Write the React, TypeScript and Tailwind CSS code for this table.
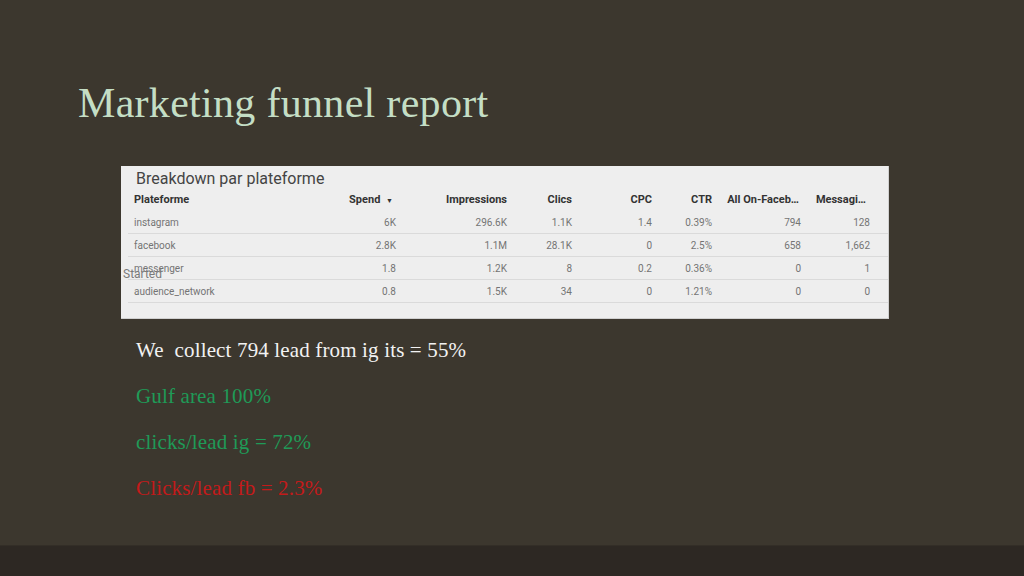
import React from "react";

const rows = [
  ["instagram", "6K", "296.6K", "1.1K", "1.4", "0.39%", "794", "128"],
  ["facebook", "2.8K", "1.1M", "28.1K", "0", "2.5%", "658", "1,662"],
  ["messenger", "1.8", "1.2K", "8", "0.2", "0.36%", "0", "1"],
  ["audience_network", "0.8", "1.5K", "34", "0", "1.21%", "0", "0"],
];

const grid = "grid grid-cols-[172px_102px_111px_65px_80px_60px_89px_69px]";

export default function App() {
  return (
    <div className="w-[1024px] h-[576px] flex flex-col bg-[#3c372e] overflow-hidden">
      <div className="h-[545px] flex flex-col">
        <div
          className="mt-[82px] ml-[78px] text-[42px] leading-[42px] tracking-[0.3px] text-[#c4dec5]"
          style={{ fontFamily: '"Liberation Serif", serif' }}
        >
          Marketing funnel report
        </div>

        <div
          className="relative mt-[42px] ml-[121px] w-[768px] h-[153px] bg-[#eeeeee] border-r border-b border-[#d0d0d0] flex flex-col pl-[7px]"
          style={{ fontFamily: "Roboto, sans-serif" }}
        >
          <div className="pt-[3px] pl-[8px] h-[23px] text-[16px] leading-[20px] text-[#444]">
            Breakdown par plateforme
          </div>
          <div className={`${grid} h-[22px] items-center text-[11px] font-bold text-[#333]`}>
            <div className="pl-[6px]">Plateforme</div>
            <div className="text-right pr-[9px]">
              Spend <span className="text-[7px] ml-[3px]">▼</span>
            </div>
            <div className="text-right pr-[6px]">Impressions</div>
            <div className="text-right pr-[6px]">Clics</div>
            <div className="text-right pr-[6px]">CPC</div>
            <div className="text-right pr-[6px]">CTR</div>
            <div className="text-right pr-[8px] whitespace-nowrap">All On-Faceb…</div>
            <div className="text-right pr-[10px] whitespace-nowrap">Messagi…</div>
          </div>
          {rows.map((r) => (
            <div
              key={r[0]}
              className={`${grid} h-[23px] items-center border-b border-[#dadada] text-[10px] text-[#747474]`}
            >
              {r.map((c, i) => (
                <div key={i} className={i === 0 ? "pl-[6px]" : "text-right pr-[6px]"}>
                  {c}
                </div>
              ))}
            </div>
          ))}
          <div className="absolute left-[2px] top-[101px] text-[12px] leading-[14px] text-[#7a7a7a]">
            Started
          </div>
        </div>

        <div
          className="mt-[19px] ml-[136px] flex flex-col gap-[21px] text-[21px] leading-[25px] tracking-[0.15px]"
          style={{ fontFamily: '"Liberation Serif", serif' }}
        >
          <div className="text-[#f2f2f2] whitespace-pre">We  collect 794 lead from ig its = 55%</div>
          <div className="text-[#1f9a57]">Gulf area 100%</div>
          <div className="text-[#1f9a57]">clicks/lead ig = 72%</div>
          <div className="text-[#c41a1a]">Clicks/lead fb = 2.3%</div>
        </div>
      </div>
      <div className="flex-1 bg-[#2d2823] border-t border-[#332e27]" />
    </div>
  );
}
